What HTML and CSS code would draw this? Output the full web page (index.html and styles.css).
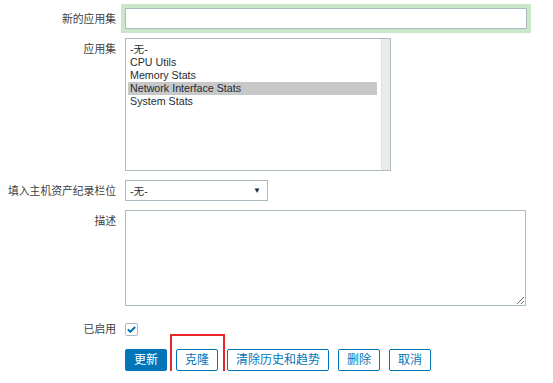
FILE: index.html
```html
<!DOCTYPE html>
<html lang="zh">

<head>
  <meta charset="UTF-8">
  <meta name="viewport" content="width=device-width, initial-scale=1.0">
  <title>应用集</title>
  <link rel="stylesheet" href="styles.css">
</head>

<body>
  <form class="form">
    <label class="label">新的应用集</label>
    <div class="field">
      <input class="text focus" type="text" value="">
    </div>

    <label class="label">应用集</label>
    <div class="field">
      <div class="listbox">
        <div class="options">
          <div class="opt">-无-</div>
          <div class="opt">CPU Utils</div>
          <div class="opt">Memory Stats</div>
          <div class="opt selected">Network Interface Stats</div>
          <div class="opt">System Stats</div>
        </div>
        <div class="scroll"></div>
      </div>
    </div>

    <label class="label">填入主机资产纪录栏位</label>
    <div class="field">
      <div class="select">
        <span>-无-</span>
        <span class="arrow">▼</span>
      </div>
    </div>

    <label class="label">描述</label>
    <div class="field">
      <textarea class="desc"></textarea>
    </div>

    <label class="label check-label">已启用</label>
    <div class="field check-field">
      <span class="checkbox">
        <svg width="11" height="11" viewBox="0 0 11 11">
          <path d="M1.8 5.4 L4.3 7.8 L9.2 3" fill="none" stroke="#0275b8" stroke-width="2"/>
        </svg>
      </span>
    </div>

    <div></div>
    <div class="field buttons">
      <button type="button" class="btn primary">更新</button>
      <span class="marked"><button type="button" class="btn">克隆</button></span>
      <button type="button" class="btn">清除历史和趋势</button>
      <button type="button" class="btn">删除</button>
      <button type="button" class="btn">取消</button>
    </div>
  </form>
</body>

</html>
```

FILE: styles.css
```css
body {
  margin: 0;
  padding: 8px 0 0;
  background: #fff;
  color: #1f2c33;
  font-family: Arial, "Liberation Sans", "Noto Sans CJK SC", sans-serif;
  font-size: 10.7px;
}

.form {
  display: grid;
  grid-template-columns: 116px 1fr;
  column-gap: 9px;
  row-gap: 9px;
}

.label {
  text-align: right;
  padding-top: 4px;
  line-height: 14px;
  font-size: 10.8px;
  color: #3b4145;
  white-space: nowrap;
}

.field {
  display: flex;
  align-items: flex-start;
}

.text {
  box-sizing: border-box;
  width: 402px;
  height: 21px;
  margin: 0;
  padding: 0 4px;
  border: 1px solid #acbbc2;
  font: inherit;
  outline: none;
}

.focus {
  box-shadow: 0 0 0 4px #c9e8c9;
}

.listbox {
  box-sizing: border-box;
  width: 266px;
  height: 133px;
  border: 1px solid #acbbc2;
  display: flex;
}

.options {
  flex: 1;
  padding: 4px 4px 0 2px;
}

.opt {
  height: 13px;
  line-height: 13px;
  padding-left: 2px;
  white-space: nowrap;
}

.selected {
  background: #c8c8c8;
}

.scroll {
  width: 8px;
  background: #ebebeb;
  border-left: 1px solid #e0e0e0;
}

.select {
  box-sizing: border-box;
  width: 143px;
  height: 21px;
  border: 1px solid #acbbc2;
  display: flex;
  align-items: center;
  justify-content: space-between;
  padding: 0 6px 0 4px;
}

.arrow {
  font-size: 8px;
  color: #1f2c33;
}

.desc {
  box-sizing: border-box;
  width: 401px;
  height: 96px;
  margin: 0;
  border: 1px solid #acbbc2;
  font: inherit;
  resize: both;
}

.check-label {
  padding-top: 0;
  line-height: 13px;
  margin-top: 8px;
}

.check-field {
  margin-top: 8px;
}

.checkbox {
  box-sizing: border-box;
  width: 13px;
  height: 13px;
  border: 1px solid #acbbc2;
  border-radius: 2px;
  display: flex;
  align-items: center;
  justify-content: center;
}

.buttons {
  gap: 9px;
  margin-top: 4px;
}

.btn {
  box-sizing: border-box;
  height: 22px;
  margin: 0;
  padding: 0 8px;
  border: 1px solid #0275b8;
  border-radius: 2px;
  background: #fff;
  color: #0275b8;
  font: inherit;
  font-size: 12px;
  line-height: 20px;
}

.primary {
  background: #0275b8;
  color: #fff;
}

.marked {
  position: relative;
  display: flex;
}

.marked::after {
  content: "";
  position: absolute;
  left: -6px;
  right: -7px;
  top: -15px;
  bottom: -8px;
  border: 2px solid #e8262b;
}
```
